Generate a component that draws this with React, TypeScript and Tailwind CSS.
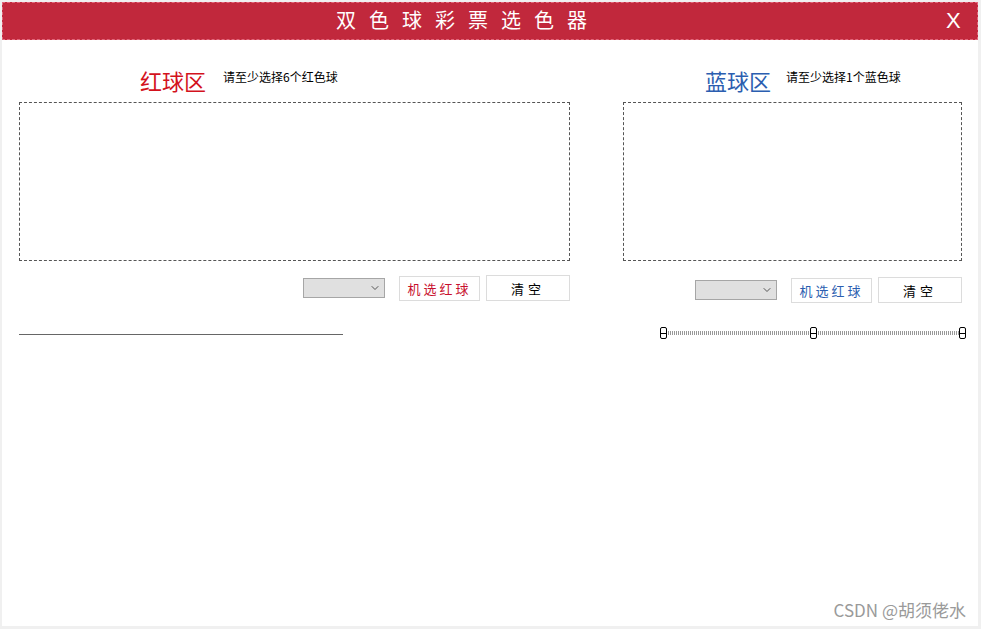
import { ChevronDown } from "lucide-react";

const cjk = { fontFamily: '"Noto Sans CJK SC", "Liberation Sans", sans-serif' };

function Picker({ color, label }: { color: string; label: string }) {
  return (
    <div className="flex items-center">
      <div className="w-[82px] h-[20px] bg-[#e0e0e0] border border-[#a6a6a6] flex items-center justify-end pr-[3px]">
        <ChevronDown className="w-[12px] h-[12px] text-[#555]" strokeWidth={2} />
      </div>
      <button
        className={`ml-[14px] w-[81px] h-[25px] bg-white border border-[#dcdcdc] text-[13px] tracking-[3px] leading-none ${color}`}
      >
        {label}
      </button>
      <button className="ml-[6px] w-[84px] h-[26px] bg-white border border-[#dcdcdc] text-[13px] tracking-[4px] leading-none text-black">
        清空
      </button>
    </div>
  );
}

function Handle() {
  return (
    <div className="w-[7px] h-[12px] border border-black rounded-[2px] bg-white relative z-10 flex items-center">
      <div className="w-full h-[1px] bg-black" />
    </div>
  );
}

export default function App() {
  return (
    <div className="w-[981px] h-[629px] bg-[#f0f0f0] pl-[2px] pt-[2px] pr-[3px] pb-[3px]" style={cjk}>
      <div className="relative w-full h-full bg-white flex flex-col">
        {/* title bar */}
        <div className="h-[38px] bg-[#c1283c] border border-dashed border-[#e2667a] flex items-center relative shrink-0">
          <div className="absolute left-[333px] top-[4px] text-white text-[20px] tracking-[13px] leading-[26px]">
            双色球彩票选色器
          </div>
          <div className="absolute left-[943px] top-[5px] text-white text-[22px] leading-[26px]" style={{ fontFamily: '"Liberation Sans", sans-serif' }}>
            X
          </div>
        </div>

        <div className="flex pl-[17px] pt-[27px]">
          {/* red */}
          <div className="w-[551px] flex flex-col">
            <div className="flex items-start h-[35px] pl-[121px]">
              <span className="text-[22px] leading-[26px] text-[#d3121d]">红球区</span>
              <span className="ml-[17px] mt-[3px] text-[12px] leading-[14px] text-black">请至少选择6个红色球</span>
            </div>
            <div className="h-[159px] border border-dashed border-[#555]" />
            <div className="flex justify-end mt-[14px]">
              <Picker color="text-[#c8102e]" label="机选红球" />
            </div>
            <div className="mt-[33px] w-[324px] h-[1px] bg-[#666]" />
          </div>

          {/* blue */}
          <div className="w-[339px] ml-[53px] flex flex-col">
            <div className="flex items-start h-[35px] pl-[82px]">
              <span className="text-[22px] leading-[26px] text-[#2b5eb0]">蓝球区</span>
              <span className="ml-[15px] mt-[3px] text-[12px] leading-[14px] text-black">请至少选择1个蓝色球</span>
            </div>
            <div className="h-[159px] border border-dashed border-[#555]" />
            <div className="flex justify-end mt-[16px]">
              <Picker color="text-[#2b5eb0]" label="机选红球" />
            </div>
            <div className="mt-[24px] ml-[37px] w-[306px] relative flex items-center justify-between">
              <div className="absolute left-[3px] right-[3px] top-1/2 -translate-y-1/2 h-[3px] border-y border-dotted border-[#333]" />
              <Handle />
              <Handle />
              <Handle />
            </div>
          </div>
        </div>

        <div className="absolute right-[12px] bottom-[6px] text-[17px] text-[#9a9a9a] leading-[20px]">
          CSDN @胡须佬水
        </div>
      </div>
    </div>
  );
}
